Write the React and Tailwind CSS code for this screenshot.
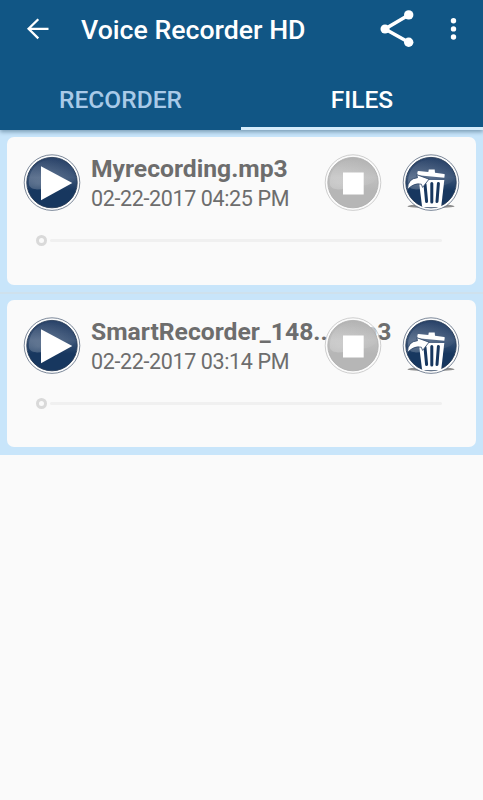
import React from 'react';

const recordings = [
  { name: 'Myrecording.mp3', date: '02-22-2017 04:25 PM' },
  { name: 'SmartRecorder_148....mp3', date: '02-22-2017 03:14 PM' },
];

function Disc({ id, rim, top, middle, bottom, shadow, ringOpacity = 1, children }) {
  return (
    <svg className="block h-[58px] w-[58px]" viewBox="0 0 58 58">
      <defs>
        <linearGradient id={id} x1="0" y1="0" x2="0" y2="1">
          <stop offset="0" stopColor={top} />
          <stop offset="0.4" stopColor={middle} />
          <stop offset="0.66" stopColor={bottom} />
          <stop offset="1" stopColor={bottom} />
        </linearGradient>
        <radialGradient id={id + '-gloss'} cx="0.2" cy="0.8" r="0.9">
          <stop offset="0" stopColor="#fff" stopOpacity="0.24" />
          <stop offset="1" stopColor="#fff" stopOpacity="0" />
        </radialGradient>
      </defs>
      {shadow && <ellipse cx="29" cy="52.2" rx="23.5" ry="2" fill="#8d8d8d" />}
      <circle cx="29" cy="28.6" r="27.8" fill="#fcfcfc" fillOpacity={ringOpacity} stroke={rim} strokeOpacity="0.75" strokeWidth="0.8" />
      <circle cx="29" cy="28.6" r="25.2" fill={'url(#' + id + ')'} stroke={rim} strokeWidth="0.9" />
      <path d="M6 31C5 14 17 5.5 29 5.5S50 13 52 25C48 32 39 31 29 33S9 38 6 31Z" fill={'url(#' + id + '-gloss)'} />
      {children}
    </svg>
  );
}

function PlayIcon({ id }) {
  return (
    <Disc id={id} rim="#263b58" top="#2a4369" middle="#3c5578" bottom="#17375f">
      <path d="M18 12.2L49.3 28.9L18 46.2Z" fill="#fff" />
    </Disc>
  );
}

function StopIcon({ id }) {
  return (
    <Disc id={id} rim="#b0b0b0" top="#b3b3b3" middle="#c0c0c0" bottom="#b6b6b6" ringOpacity={0.6}>
      <rect x="19" y="18.5" width="20.7" height="22" fill="#fff" />
    </Disc>
  );
}

function TrashIcon({ id }) {
  return (
    <Disc id={id} rim="#263b58" top="#2a4369" middle="#3c5578" bottom="#17375f" shadow>
      <path
        d="M16.8 26H42.3L39.3 52Q39.1 53.2 37.8 53.2H21.6Q20.2 53.2 20 52Z"
        fill="#fff"
      />
      <path d="M23 30.5L24.6 47.5M29.8 29.5V48M36.4 29.5L35 47.5" fill="none" stroke="#17375f" strokeWidth="3" strokeLinecap="round" />
      <path
        d="M16.5 17L26.3 18.1L26.8 15.4H32.7L33 18.8L42.2 20Q42.8 20.2 42.7 21L42.3 23.8L16.1 21.2Q15.2 21 15.3 20L15.5 17.8Q15.7 17 16.5 17Z"
        fill="#fff"
      />
      <path
        d="M5.5 35.5Q5.5 24.5 15.5 23.7L14.8 20.7L27 25.2L20.6 33.4L19.3 30.2Q12 28.5 5.5 35.5Z"
        fill="#fff"
        stroke="#294366"
        strokeWidth="0.8"
      />
    </Disc>
  );
}

function RecordingCard({ recording, index }) {
  return (
    <article className="h-[147.5px] rounded-[7px] bg-[#fafafa] pl-4 pt-[17px]">
      <div className="flex h-[58px]">
        <button className="shrink-0" aria-label="Play">
          <PlayIcon id={'play' + index} />
        </button>
        <div className="ml-[10px] w-[233px] shrink-0 whitespace-nowrap text-[#6d6d6d]">
          <h2 className="text-[24.7px] leading-[30px] font-bold">{recording.name}</h2>
          <p className="text-[21.5px] leading-[30px] tracking-[-0.37px]">{recording.date}</p>
        </div>
        <button className="relative z-10 shrink-0" aria-label="Stop">
          <StopIcon id={'stop' + index} />
        </button>
        <button className="ml-5 shrink-0" aria-label="Delete">
          <TrashIcon id={'trash' + index} />
        </button>
      </div>
      <div className="mt-[23px] ml-[13px] flex h-[11px] items-center gap-[3px]">
        <div className="h-[11px] w-[11px] rounded-full border-[3px] border-[#d9d9d9]" />
        <div className="h-[3px] w-[392px] rounded-full bg-[#f0f0f0]" />
      </div>
    </article>
  );
}

export default function App() {
  return (
    <div className="h-[800px] w-[483px] overflow-hidden bg-[#fafafa] font-[Roboto,sans-serif]">
      <header className="relative z-10 h-[130px] bg-[#115685] text-white shadow-[0_2px_4px_rgba(30,70,100,0.45)]">
        <div className="flex h-[60px] items-center">
          <svg className="ml-[26px] block h-6 w-6" viewBox="0 0 24 24" fill="none" stroke="currentColor" strokeWidth="2.3">
            <path d="M22.5 10.8H2.5M12.3 1.2L2.6 10.8L12.3 20.4" />
          </svg>
          <h1 className="ml-[31px] w-[298px] text-[26.7px] leading-[60px] font-medium whitespace-nowrap">Voice Recorder HD</h1>
          <svg className="block h-[40px] w-[36px]" viewBox="0 0 36 40" fill="currentColor">
            <path d="M29.7 5L6 19L29.7 32.2" fill="none" stroke="currentColor" strokeWidth="3.6" />
            <circle cx="6" cy="19" r="4.5" />
            <circle cx="29.7" cy="4.9" r="4.7" />
            <circle cx="29.7" cy="32.2" r="4.7" />
          </svg>
          <svg className="ml-[35px] block h-6 w-[7px]" viewBox="0 0 7 24" fill="currentColor">
            <circle cx="3.5" cy="2.8" r="2.7" />
            <circle cx="3.5" cy="10.9" r="2.7" />
            <circle cx="3.5" cy="19" r="2.7" />
          </svg>
        </div>
        <nav className="flex h-[70px] text-center text-[24.5px] font-medium">
          <button className="w-[241px] pt-[11px] text-[#a9cae8]">RECORDER</button>
          <button className="w-[242px] border-b-[3px] border-[#d5ecfb] pt-[14px]">FILES</button>
        </nav>
      </header>
      <main className="h-[325px] bg-[#c8e5fa] px-[7px] pt-[7px]">
        <RecordingCard recording={recordings[0]} index={0} />
        <div className="-mx-[7px] mt-[7px] mb-[6px] h-[2px] bg-[#cee1ed]" />
        <RecordingCard recording={recordings[1]} index={1} />
      </main>
    </div>
  );
}
